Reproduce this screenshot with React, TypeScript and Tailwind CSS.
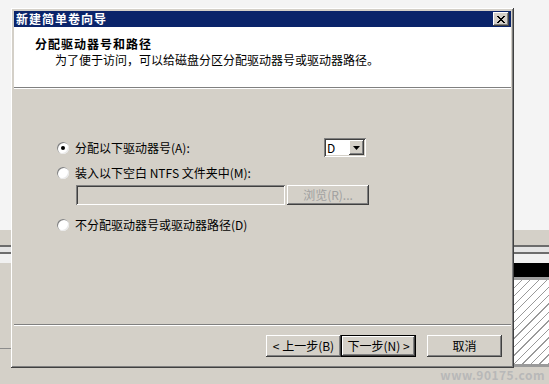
import React from "react";

const FONT = { fontFamily: '"Noto Sans CJK SC", "Noto Sans", sans-serif' };

const raised =
  "shadow-[inset_-1px_-1px_#404040,inset_1px_1px_#ffffff,inset_-2px_-2px_#808080,inset_2px_2px_#d4d0c8]";
const sunken =
  "shadow-[inset_1px_1px_#808080,inset_-1px_-1px_#ffffff,inset_2px_2px_#404040,inset_-2px_-2px_#d4d0c8]";

function Radio({ checked, label }: { checked?: boolean; label: string }) {
  return (
    <div className="flex items-center h-4">
      <span className="w-3 h-3 rounded-full bg-white flex items-center justify-center shadow-[inset_1px_1px_#808080,inset_-1px_-1px_#e8e8e8]">
        {checked && <span className="w-1 h-1 rounded-full bg-black" />}
      </span>
      <span className="ml-[6px] text-[12px] leading-4 text-black">{label}</span>
    </div>
  );
}

function Button({
  children,
  isDefault,
  disabled,
  className = "",
}: {
  children: React.ReactNode;
  isDefault?: boolean;
  disabled?: boolean;
  className?: string;
}) {
  return (
    <div
      className={`flex items-center justify-center bg-[#d4d0c8] text-[12px] ${
        isDefault ? "border border-black" : ""
      } ${className}`}
    >
      <div
        className={`w-full h-full flex items-center justify-center ${raised} ${
          disabled ? "text-[#a0a0a0]" : "text-black"
        }`}
      >
        {children}
      </div>
    </div>
  );
}

export default function App() {
  return (
    <div
      className="relative w-[549px] h-[384px] overflow-hidden bg-[#d4d0c8]"
      style={FONT}
    >
      {/* desktop / background windows */}
      <div className="absolute left-0 top-0 w-full h-[230px] bg-[#f4f4f4]" />
      <div className="absolute left-0 top-[245px] w-full h-[2px] bg-[#6c6c6c]" />
      <div className="absolute left-0 top-[247px] w-full h-[5px] bg-[#e4e4e4]" />
      <div className="absolute left-0 top-[252px] w-full h-[2px] bg-[#6c6c6c]" />
      <div className="absolute left-0 top-[254px] w-full h-[9px] bg-[#f0f0f0]" />
      <div className="absolute left-0 top-[348px] w-[12px] h-px bg-[#8c8c8c]" />
      <div className="absolute left-[514px] top-[263px] w-[35px] h-[14px] bg-black" />
      <div className="absolute left-[514px] top-[277px] w-[35px] h-[3px] bg-[#a0a0a0]" />
      <div className="absolute left-[514px] top-[280px] w-[35px] h-[84px] bg-[repeating-linear-gradient(135deg,#ffffff_0px,#ffffff_5px,#9a9a9a_5px,#9a9a9a_6px)]" />
      <div className="absolute left-[514px] top-[364px] w-[35px] h-[3px] bg-[#9a9a9a]" />

      {/* wizard dialog */}
      <div
        className={`absolute left-[11px] top-[8px] w-[503px] h-[360px] bg-[#d4d0c8] p-[3px] flex flex-col ${raised}`}
      >
        {/* title bar */}
        <div className="h-4 bg-[#0a246a] flex items-center justify-between pl-[2px] pr-[2px]">
          <span className="text-white text-[12px] font-bold leading-4 tracking-[1px]">
            新建简单卷向导
          </span>
          <div
            className={`w-[16px] h-[14px] bg-[#d4d0c8] flex items-center justify-center ${raised}`}
          >
            <svg width="8" height="7" viewBox="0 0 8 7">
              <path
                d="M0 0h2v1h1v1h2V1h1V0h2v1H7v1H6v1H5v1h1v1h1v1h1v1H6V6H5V5H3v1H2v1H0V6h1V5h1V4h1V3H2V2H1V1H0z"
                fill="#000"
              />
            </svg>
          </div>
        </div>

        {/* header */}
        <div className="h-[61px] bg-white border-b border-[#808080] pt-[9px]">
          <div className="pl-[21px] text-[12px] font-bold leading-4 tracking-[1px] text-black">
            分配驱动器号和路径
          </div>
          <div className="pl-[41px] text-[12px] leading-4 text-black">
            为了便于访问，可以给磁盘分区分配驱动器号或驱动器路径。
          </div>
        </div>
        <div className="h-px bg-white" />

        {/* body */}
        <div className="flex-1 flex flex-col">
          <div className="flex-1 pl-[43px] pt-[49px]">
            <div className="w-[309px] flex items-center justify-between">
              <Radio checked label="分配以下驱动器号(A):" />
              <div
                className={`w-[42px] h-[19px] bg-white flex items-center pl-[3px] pr-[2px] ${sunken}`}
              >
                <span className="flex-1 text-[12px] leading-4">D</span>
                <div
                  className={`w-[15px] h-[15px] bg-[#d4d0c8] flex items-center justify-center ${raised}`}
                >
                  <svg width="7" height="4" viewBox="0 0 7 4">
                    <path d="M0 0h7L3.5 4z" fill="#000" />
                  </svg>
                </div>
              </div>
            </div>
            <div className="mt-2">
              <Radio label="装入以下空白 NTFS 文件夹中(M):" />
            </div>
            <div className="mt-[4px] ml-[19px] flex items-center gap-[2px]">
              <div className={`w-[209px] h-5 bg-[#d4d0c8] ${sunken}`} />
              <Button disabled className="w-[82px] h-5">
                浏览(R)...
              </Button>
            </div>
            <div className="mt-[12px]">
              <Radio label="不分配驱动器号或驱动器路径(D)" />
            </div>
          </div>

          {/* separator */}
          <div className="h-px bg-[#808080]" />
          <div className="h-px bg-white" />

          {/* buttons */}
          <div className="flex justify-end pt-[9px] pr-[9px] pb-[8px]">
            <Button className="w-[75px] h-[22px]">&lt; 上一步(B)</Button>
            <Button isDefault className="w-[75px] h-[22px]">
              下一步(N) &gt;
            </Button>
            <Button className="w-[75px] h-[22px] ml-[11px]">取消</Button>
          </div>
        </div>
      </div>

      {/* watermark */}
      <div className="absolute right-[4px] bottom-[1px] text-[12px] font-bold text-[#b8b8b8] leading-4 tracking-[0.5px]">
        www.90175.com
      </div>
    </div>
  );
}
